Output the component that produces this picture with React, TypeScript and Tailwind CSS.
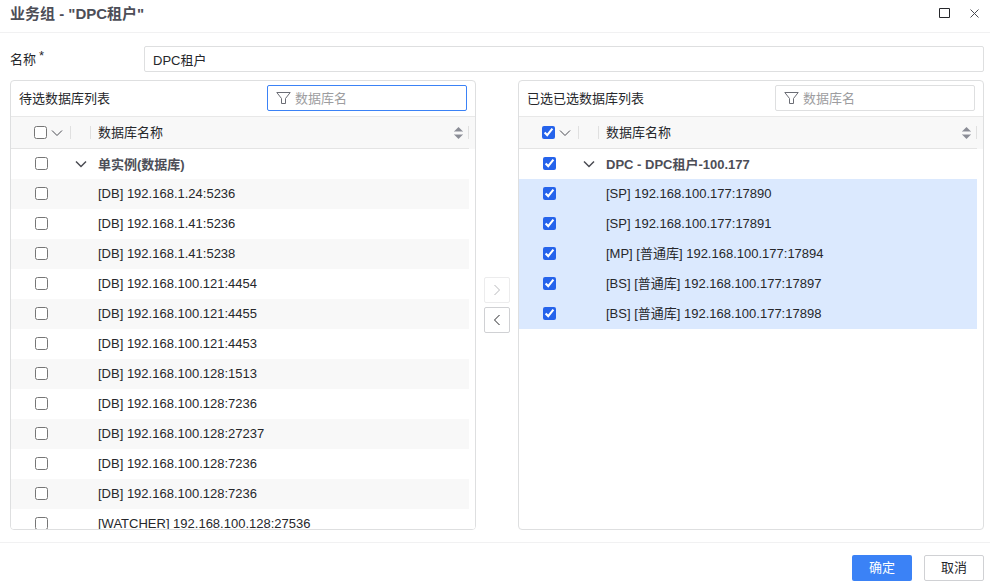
import { useState } from 'react'
import clsx from 'clsx'

interface DbGroup {
  name: string
  items: string[]
}

interface DbPanelProps {
  id: string
  title: string
  group: DbGroup
  selected?: boolean
  active?: boolean
}

const CANDIDATES: DbGroup = {
  name: '单实例(数据库)',
  items: [
    '[DB] 192.168.1.24:5236',
    '[DB] 192.168.1.41:5236',
    '[DB] 192.168.1.41:5238',
    '[DB] 192.168.100.121:4454',
    '[DB] 192.168.100.121:4455',
    '[DB] 192.168.100.121:4453',
    '[DB] 192.168.100.128:1513',
    '[DB] 192.168.100.128:7236',
    '[DB] 192.168.100.128:27237',
    '[DB] 192.168.100.128:7236',
    '[DB] 192.168.100.128:7236',
    '[WATCHER] 192.168.100.128:27536',
  ],
}

const SELECTED: DbGroup = {
  name: 'DPC - DPC租户-100.177',
  items: [
    '[SP] 192.168.100.177:17890',
    '[SP] 192.168.100.177:17891',
    '[MP] [普通库] 192.168.100.177:17894',
    '[BS] [普通库] 192.168.100.177:17897',
    '[BS] [普通库] 192.168.100.177:17898',
  ],
}

function FilterIcon({ className }: { className?: string }) {
  return (
    <svg className={className} width="15" height="14" viewBox="0 0 15 14" fill="none" stroke="currentColor">
      <path d="M.8 1.500h13.400L9.500 7.500v5h-4v-5z" />
    </svg>
  )
}

function ChevronDown({ bold }: { bold?: boolean }) {
  return (
    <svg width="12" height="12" viewBox="0 0 12 12" fill="none" stroke="currentColor" strokeWidth={bold ? 1.5 : 1}>
      <path d="M1 3.5l5 5 5-5" />
    </svg>
  )
}

function SortIcon() {
  return (
    <svg width="9" height="12" viewBox="0 0 9 12">
      <path d="M4.500 0L8.500 4h-8zM4.500 12L.5 8h8z" fill="#8b8d96" />
      <path d="M0 4h9v1H0zM0 7h9v1H0z" fill="#c4c5ca" />
    </svg>
  )
}

function DbPanel({ id, title, group, selected = false, active = false }: DbPanelProps) {
  const [keyword, setKeyword] = useState('')
  const [open, setOpen] = useState(true)
  const items = group.items.filter((item) => item.includes(keyword))

  return (
    <section className="flex min-w-0 flex-1 flex-col overflow-hidden rounded border border-[#dedfe0]">
      <div className="flex h-9 shrink-0 items-center justify-between border-b border-[#e8e8e8] px-2 pb-px">
        <h2 className="pt-0.5">{title}</h2>
        <div className="relative">
          <FilterIcon className="absolute left-[9px] top-1.5 text-[#6b6d75]" />
          <input
            type="text"
            aria-label={`${title} 数据库名`}
            placeholder="数据库名"
            value={keyword}
            onChange={(e) => setKeyword(e.target.value)}
            className={clsx(
              'block h-[26px] w-[200px] rounded-xs border bg-transparent pl-[27px] pr-2 outline-none placeholder:text-[#9d9da0]',
              active ? 'border-[#3b82f6]' : 'border-[#dedfe0]',
            )}
          />
        </div>
      </div>

      <div className="min-h-0 flex-1 overflow-y-auto [scrollbar-width:none]">
        <table className="w-full table-fixed border-separate border-spacing-0 text-left">
          <colgroup>
            <col className="w-[60px]" />
            <col className="w-5" />
            <col />
            <col className="w-1.5" />
          </colgroup>
          <thead className="sticky top-0 z-10 bg-[#f8f8f8]">
            <tr className="h-8">
              <th className="border-b border-[#e4e4e4] p-0 font-normal">
                <div className="flex items-center pl-[23px]">
                  <input
                    type="checkbox"
                    aria-label="全选"
                    defaultChecked={selected}
                    className="size-[13px] accent-[#2563eb]"
                  />
                  <button type="button" aria-label="选择方式" className="ml-1 text-[#4a4b52]">
                    <ChevronDown />
                  </button>
                  <span className="ml-auto h-[13px] w-px bg-[#e0e0e0]" />
                </div>
              </th>
              <th className="border-b border-[#e4e4e4] p-0">
                <div className="flex justify-end">
                  <span className="h-[13px] w-px bg-[#e0e0e0]" />
                </div>
              </th>
              <th className="border-b border-[#e4e4e4] p-0 pl-[7px] font-normal">
                <div className="flex items-center">
                  <span>数据库名称</span>
                  <button type="button" aria-label="排序" className="ml-auto mr-[5px]">
                    <SortIcon />
                  </button>
                  <span className="h-[13px] w-px bg-[#e0e0e0]" />
                </div>
              </th>
              <th className="p-0" />
            </tr>
          </thead>
          <tbody>
            <tr className="h-[30px]">
              <td className="p-0 pb-px pl-6">
                <input
                  type="checkbox"
                  aria-label={group.name}
                  defaultChecked={selected}
                  className="block size-[13px] accent-[#2563eb]"
                />
              </td>
              <td className="p-0">
                <button
                  type="button"
                  aria-label="展开"
                  aria-expanded={open}
                  onClick={() => setOpen(!open)}
                  className="mx-auto block text-[#4a4b52]"
                >
                  <ChevronDown bold />
                </button>
              </td>
              <td className="p-0 pl-[7px] pt-0.5 font-bold text-[#4d4e57]">{group.name}</td>
              <td className="p-0" />
            </tr>
            {open &&
              items.map((item, i) => (
                <tr
                  key={i}
                  className={clsx('h-[30px]', selected ? 'bg-[#dbe9fe]' : i % 2 === 0 ? 'bg-[#f8f8f8]' : 'bg-white')}
                >
                  <td className="p-0 pb-px pl-6">
                    <input
                      type="checkbox"
                      id={`${id}-${i}`}
                      defaultChecked={selected}
                      className="block size-[13px] accent-[#2563eb]"
                    />
                  </td>
                  <td className="p-0" />
                  <td className="truncate p-0 pl-[7px]">
                    <label htmlFor={`${id}-${i}`}>{item}</label>
                  </td>
                  <td className="bg-white p-0" />
                </tr>
              ))}
          </tbody>
        </table>
      </div>
    </section>
  )
}

export default function App() {
  return (
    <div className="flex h-screen flex-col bg-white font-['Liberation_Sans','Noto_Sans_CJK_SC',sans-serif] text-[13px] leading-5 text-[#26272b]">
      <header className="flex h-[33px] shrink-0 items-center border-b border-[#f1f1f2] pb-1.5 pl-2.5 pr-[11px]">
        <h1 className="pt-0.5 text-[15px] font-bold text-[#4d4e57]">业务组 - "DPC租户"</h1>
        <button type="button" aria-label="最大化" className="ml-auto text-[#26272b]">
          <svg width="11" height="10" viewBox="0 0 11 10" fill="none" stroke="currentColor">
            <path d="M.5.5h10v9H.5z" />
          </svg>
        </button>
        <button type="button" aria-label="关闭" className="ml-5 text-[#4a4b52]">
          <svg width="9" height="9" viewBox="0 0 9 9" fill="none" stroke="currentColor">
            <path d="M.5.5l8 8M8.500.5l-8 8" />
          </svg>
        </button>
      </header>

      <main className="flex min-h-0 flex-1 flex-col gap-2 pb-3 pl-2.5 pr-1.5 pt-[13px]">
        <div className="flex items-center">
          <label htmlFor="group-name" className="flex w-[134px] shrink-0 gap-[3px] pt-0.5">
            名称
            <span className="-mt-1">*</span>
          </label>
          <input
            id="group-name"
            type="text"
            defaultValue="DPC租户"
            className="h-[26px] min-w-0 flex-1 rounded-xs border border-[#dedfe0] px-2 outline-none"
          />
        </div>

        <div className="flex min-h-0 flex-1 gap-2">
          <DbPanel id="candidate" title="待选数据库列表" group={CANDIDATES} active />
          <div className="flex flex-col justify-center gap-1">
            <button
              type="button"
              aria-label="添加"
              disabled
              className="flex size-[26px] items-center justify-center rounded-xs border border-[#ececed] text-[#b9babd]"
            >
              <svg width="8" height="12" viewBox="0 0 8 12" fill="none" stroke="currentColor">
                <path d="M1.500 1l5 5-5 5" />
              </svg>
            </button>
            <button
              type="button"
              aria-label="移除"
              className="flex size-[26px] items-center justify-center rounded-xs border border-[#d0d1d4] text-[#26272b]"
            >
              <svg width="8" height="12" viewBox="0 0 8 12" fill="none" stroke="currentColor">
                <path d="M6.500 1l-5 5 5 5" />
              </svg>
            </button>
          </div>
          <DbPanel id="selected" title="已选已选数据库列表" group={SELECTED} selected />
        </div>
      </main>

      <footer className="flex shrink-0 justify-end gap-3 border-t border-[#f1f1f2] pb-[5px] pr-1.5 pt-3">
        <button type="button" className="h-[26px] w-[60px] rounded-xs bg-[#3b82f6] text-white">
          确定
        </button>
        <button type="button" className="h-[26px] w-[60px] rounded-xs border border-[#d0d1d4]">
          取消
        </button>
      </footer>
    </div>
  )
}
